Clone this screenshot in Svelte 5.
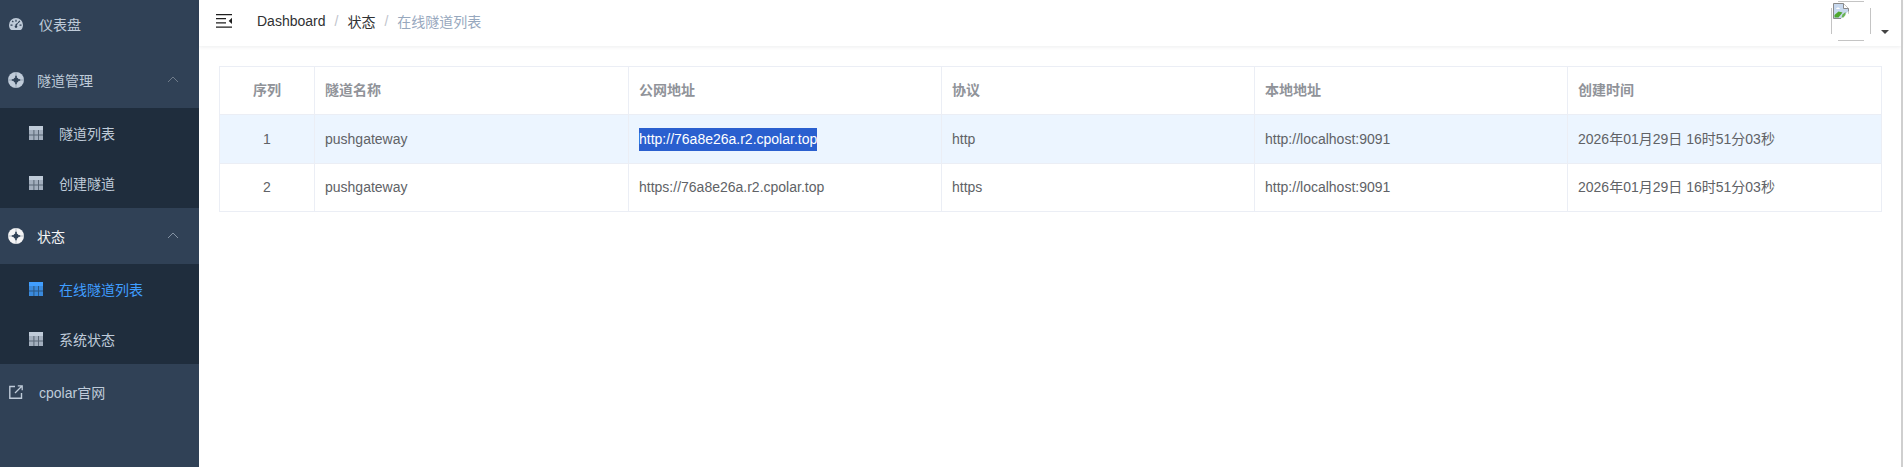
<script>
  const columns = ['序列', '隧道名称', '公网地址', '协议', '本地地址', '创建时间'];
  const widths = [95, 314, 313, 313, 313, 314];
  const rows = [
    { id: 1, name: 'pushgateway', url: 'http://76a8e26a.r2.cpolar.top', proto: 'http', local: 'http://localhost:9091', time: '2026年01月29日 16时51分03秒', current: true },
    { id: 2, name: 'pushgateway', url: 'https://76a8e26a.r2.cpolar.top', proto: 'https', local: 'http://localhost:9091', time: '2026年01月29日 16时51分03秒', current: false }
  ];
  const groups = [
    { title: '隧道管理', open: false, items: [{ label: '隧道列表' }, { label: '创建隧道' }] },
    { title: '状态', open: true, items: [{ label: '在线隧道列表', active: true }, { label: '系统状态' }] }
  ];
</script>

{#snippet tableIcon()}
  <svg class="icon-table" viewBox="0 0 14 14" width="14" height="14">
    <path fill="currentColor" d="M0 0h14v14H0z" opacity=".82"/>
    <path fill="currentColor" d="M0 0h14v4H0z"/>
    <path fill="#1f2d3d" opacity=".55" d="M4.400 4h1v10h-1zM9 4h1v10H9zM0 8.600h14v1H0z"/>
  </svg>
{/snippet}

{#snippet ringIcon()}
  <svg class="icon-ring" viewBox="0 0 16 16" width="16" height="16">
    <circle cx="8" cy="8" r="8" fill="currentColor"/>
    <circle cx="8" cy="8" r="2.600" fill="#304156"/>
    <path fill="#304156" opacity=".8" d="M7 3.800h2v8.400H7zM3.800 7h8.400v2H3.800z"/>
    <path fill="#304156" opacity=".3" d="M7.500 0h1v16h-1zM0 7.500h16v1H0z"/>
  </svg>
{/snippet}

<div class="app">
  <aside class="sidebar">
    <div class="menu">
      <div class="item">
        <svg class="icon-top" viewBox="0 0 14 12" width="14" height="12">
          <path fill="currentColor" d="M7 0a7 7 0 0 0-7 7c0 1.800.6 3.500 1.600 4.500.2.300.5.500.9.500h9c.4 0 .7-.2.9-.5C13.400 10.500 14 8.800 14 7a7 7 0 0 0-7-7z"/>
          <path fill="#304156" d="M6.400 1.800h1.200v2H6.400zM2.700 3.300l.9-.8 1.200 1.300-.9.800zM1.500 6.600h2v1.200h-2zM10.500 6.600h2v1.200h-2zM10.400 2.500l.9.8-1.800 1.900-.8-.8zM6.200 6.800l2.200-2 .6.500-1.500 2.700z"/>
          <circle cx="7" cy="8.600" r="1.300" fill="#304156"/>
        </svg>
        <span class="top-label">仪表盘</span>
      </div>

      {#each groups as group}
        <div class="item group" class:open={group.open}>
          {@render ringIcon()}
          <span class="group-label">{group.title}</span>
          <svg class="chevron" viewBox="0 0 12 7" width="12" height="7">
            <path d="M1 6l5-5 5 5" fill="none" stroke="currentColor" stroke-width="1"/>
          </svg>
        </div>
        <div class="submenu">
          {#each group.items as sub}
            <div class="subitem" class:active={sub.active}>
              {@render tableIcon()}
              <span class="sub-label">{sub.label}</span>
            </div>
          {/each}
        </div>
      {/each}

      <div class="item">
        <svg class="icon-top" viewBox="0 0 14 14" width="14" height="14">
          <path d="M6 1.500H.8v11.700h11.700V8" fill="none" stroke="currentColor" stroke-width="1.400"/>
          <path d="M6 8l7-7M8.800.8h4.400v4.400" fill="none" stroke="currentColor" stroke-width="1.300"/>
        </svg>
        <span class="top-label">cpolar官网</span>
      </div>
    </div>
  </aside>

  <main class="main">
    <header class="navbar">
      <svg class="hamburger" viewBox="0 0 16 14" width="16" height="14">
        <path fill="#1f1f1f" d="M0 0h16v1.300H0zM0 12.500h16v1.300H0zM0 4h10v1.300H0zM0 8.300h10v1.300H0z"/>
        <path fill="#1f1f1f" d="M16 3.800v6.200l-3.300-3.100z"/>
      </svg>
      <nav class="crumbs">
        <span class="crumb">Dashboard</span>
        <span class="sep">/</span>
        <span class="crumb">状态</span>
        <span class="sep">/</span>
        <span class="crumb current">在线隧道列表</span>
      </nav>
      <div class="user">
        <div class="avatar">
          <svg class="broken" viewBox="0 0 16 16" width="16" height="16">
            <path d="M.5.500h10l5 5v5l-5 5H.5z" fill="#c7d8ee" stroke="#8a8a8a"/>
            <path d="M10.500.500v5h5" fill="#fff" stroke="#8a8a8a"/>
            <path d="M1.500 14.500V12l4-3.500 4 1-4 5z" fill="#4fa82e"/>
            <path d="M3 6c1-2 3-2 4 0z" fill="#fff"/>
            <path d="M8 15.500l7.500-7.500v8H8z" fill="#fff"/>
            <path d="M9.500 11.500l3-2.500v3l-2 2.500h-2z" fill="#4fa82e" opacity=".8"/>
          </svg>
        </div>
        <span class="caret"></span>
      </div>
    </header>

    <section class="content">
      <table class="table">
        <colgroup>
          {#each widths as width}
            <col style:width="{width}px" />
          {/each}
        </colgroup>
        <thead>
          <tr>
            {#each columns as col, i}
              <th class:center={i === 0}>{col}</th>
            {/each}
          </tr>
        </thead>
        <tbody>
          {#each rows as row}
            <tr class:current={row.current}>
              <td class="center">{row.id}</td>
              <td>{row.name}</td>
              <td>{#if row.current}<span class="picked">{row.url}</span>{:else}{row.url}{/if}</td>
              <td>{row.proto}</td>
              <td>{row.local}</td>
              <td>{row.time}</td>
            </tr>
          {/each}
        </tbody>
      </table>
    </section>
  </main>
  <div class="edge"></div>
</div>

<style>
  :global(body) {
    margin: 0;
    background: #fff;
    font-family: "Liberation Sans", "Noto Sans CJK SC", sans-serif;
  }
  .app {
    display: flex;
    height: 467px;
    overflow: hidden;
    padding-right: 1px;
    box-sizing: border-box;
  }
  .sidebar {
    width: 199px;
    flex: none;
    background: #304156;
    color: #bfcbd9;
    font-size: 14px;
    overflow: hidden;
  }
  .menu {
    margin-top: -4px;
  }
  .item {
    height: 56px;
    display: flex;
    align-items: center;
    box-sizing: border-box;
    padding-left: 9px;
  }
  .group {
    padding-left: 8px;
    position: relative;
  }
  .group.open {
    color: #f4f4f5;
  }
  .group.open .chevron {
    color: #8492a3;
  }
  .top-label {
    margin-left: 16px;
  }
  .icon-top,
  .icon-ring,
  .icon-table {
    flex: none;
  }
  .group-label {
    margin-left: 13px;
  }
  .chevron {
    position: absolute;
    left: 167px;
    top: 24px;
    color: #6f7b8a;
  }
  .submenu {
    background: #1f2d3d;
  }
  .subitem {
    height: 50px;
    display: flex;
    align-items: center;
    padding-left: 29px;
  }
  .subitem.active {
    color: #409eff;
  }
  .sub-label {
    margin-left: 16px;
  }
  .main {
    flex: 1;
    min-width: 0;
  }
  .navbar {
    height: 46px;
    display: flex;
    align-items: center;
    box-shadow: 0 1px 4px rgba(0, 21, 41, 0.08);
    padding: 0 0 0 17px;
  }
  .hamburger {
    flex: none;
    margin-top: -5px;
  }
  .crumbs {
    margin-left: 25px;
    font-size: 14px;
    color: #303133;
    display: flex;
    align-items: center;
    margin-top: -4px;
  }
  .sep {
    color: #c0c4cc;
    margin: 0 9px;
  }
  .crumb.current {
    color: #97a8be;
  }
  .user {
    margin-left: auto;
    display: flex;
    align-items: flex-start;
    align-self: flex-start;
    margin-right: 12px;
    margin-top: 1px;
  }
  .avatar {
    width: 40px;
    height: 40px;
    box-sizing: border-box;
    background:
      linear-gradient(#c4c4c4, #c4c4c4) top center / 26px 1px no-repeat,
      linear-gradient(#c4c4c4, #c4c4c4) bottom center / 26px 1px no-repeat,
      linear-gradient(#c4c4c4, #c4c4c4) left center / 1px 26px no-repeat,
      linear-gradient(#c4c4c4, #c4c4c4) right center / 1px 26px no-repeat,
      #fff;
  }
  .broken {
    display: block;
    margin: 2px 0 0 2px;
  }
  .caret {
    width: 0;
    height: 0;
    margin: 29px 0 0 10px;
    border-left: 4px solid transparent;
    border-right: 4px solid transparent;
    border-top: 4px solid #444;
  }
  .content {
    padding: 20px 20px 0;
  }
  .table {
    width: 100%;
    table-layout: fixed;
    border-collapse: collapse;
    font-size: 14px;
    color: #606266;
    line-height: 23px;
  }
  th,
  td {
    border: 1px solid #ebeef5;
    padding: 8px 10px;
    height: 31px;
    text-align: left;
    box-sizing: content-box;
  }
  th {
    color: #909399;
    font-weight: 700;
  }
  .center {
    text-align: center;
  }
  tr.current td {
    background: #ecf5ff;
    height: 32px;
  }
  .picked {
    display: inline-block;
    background: #2a5fcf;
    color: #fff;
  }
  .edge {
    width: 2px;
    flex: none;
    background: #cfcfcf;
  }
</style>
